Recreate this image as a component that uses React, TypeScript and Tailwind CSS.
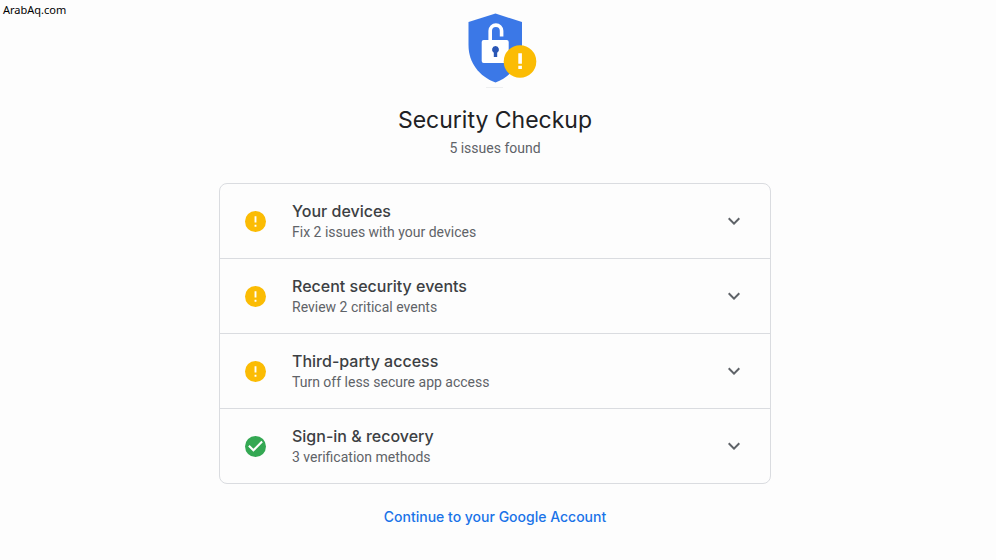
import React from 'react';

type Status = 'warning' | 'ok';

interface CheckItem {
  title: string;
  detail: string;
  status: Status;
}

const items: CheckItem[] = [
  { title: 'Your devices', detail: 'Fix 2 issues with your devices', status: 'warning' },
  { title: 'Recent security events', detail: 'Review 2 critical events', status: 'warning' },
  { title: 'Third-party access', detail: 'Turn off less secure app access', status: 'warning' },
  { title: 'Sign-in & recovery', detail: '3 verification methods', status: 'ok' },
];

const ShieldLogo: React.FC = () => (
  <svg width="96" height="84" viewBox="0 0 96 84" aria-hidden="true">
    <rect x="39" y="79" width="17" height="1" fill="#eeeff0" />
    <path d="M48.5 5.5 75 14v23c0 17.5-10.5 31.5-26.5 37.5C32 68.5 21.5 54.5 21.5 37V14z" fill="#3b78e7" />
    <path d="M43.2 34V22.8a5.7 5.7 0 0 1 11.4 0V28.5" fill="none" stroke="#fff" strokeWidth="3.6" />
    <rect x="34.7" y="32" width="27" height="23" rx="2" fill="#fff" />
    <path d="M48.5 38a3.6 3.6 0 0 1 1.7 6.7V49h-3.4v-4.3A3.6 3.6 0 0 1 48.5 38z" fill="#2a56b5" />
    <circle cx="73" cy="53.5" r="16.3" fill="#fbbc04" />
    <path d="M71.3 45.3h3.6v10.4h-3.6zM71.3 57.7h3.6v3.4h-3.6z" fill="#fff" />
  </svg>
);

const StatusIcon: React.FC<{ status: Status }> = ({ status }) => (
  <svg className="shrink-0" width="21" height="21" viewBox="2 2 20 20" aria-hidden="true">
    <circle cx="12" cy="12" r="10" fill={status === 'ok' ? '#34a853' : '#fbbc04'} />
    {status === 'ok' ? (
      <path d="M10 17l-5-5 1.41-1.41L10 14.17l7.59-7.59L19 8z" fill="#fff" />
    ) : (
      <path d="M11.1 7h1.8v6h-1.8zM11.1 15h1.8v2h-1.8z" fill="#fff" />
    )}
  </svg>
);

const Chevron: React.FC = () => (
  <svg className="shrink-0" width="24" height="24" viewBox="0 0 24 24" aria-hidden="true">
    <path d="M16.59 8.59 12 13.17 7.41 8.59 6 10l6 6 6-6z" fill="#5f6368" />
  </svg>
);

const App: React.FC = () => {
  return (
    <div className="min-h-screen bg-[#fdfdfd] font-[Roboto,sans-serif]">
      <header className="h-2 pl-[3px] pt-1">
        <p className="w-fit font-['Noto_Sans',sans-serif] text-[11px] leading-3 text-black">ArabAq.com</p>
      </header>

      <main className="flex flex-col items-center pr-1.5">
        <ShieldLogo />
        <h1 className="mt-3 font-[Inter,sans-serif] text-[23px] leading-8 text-[#202124]">Security Checkup</h1>
        <p className="mt-0.5 text-sm leading-5 text-[#5f6368]">5 issues found</p>

        {/* Check list */}
        <ul className="mt-[25px] w-full max-w-[552px] divide-y divide-[#dadce0] overflow-hidden rounded-lg border border-[#dadce0]">
          {items.map((item) => (
            <li key={item.title}>
              <button
                type="button"
                aria-expanded="false"
                className="flex w-full cursor-pointer items-center gap-[26px] py-4 pl-[25px] pr-6 text-left"
              >
                <StatusIcon status={item.status} />
                <span className="min-w-0 flex-1">
                  <span className="block font-[Inter,sans-serif] text-base font-medium leading-[22px] text-[#3c4043]">{item.title}</span>
                  <span className="block text-sm leading-5 text-[#5f6368]">{item.detail}</span>
                </span>
                <Chevron />
              </button>
            </li>
          ))}
        </ul>

        <a href="#account" className="mt-[23px] font-[Inter,sans-serif] text-sm font-medium leading-5 text-[#1a73e8]">
          Continue to your Google Account
        </a>
      </main>
    </div>
  );
};

export default App;
